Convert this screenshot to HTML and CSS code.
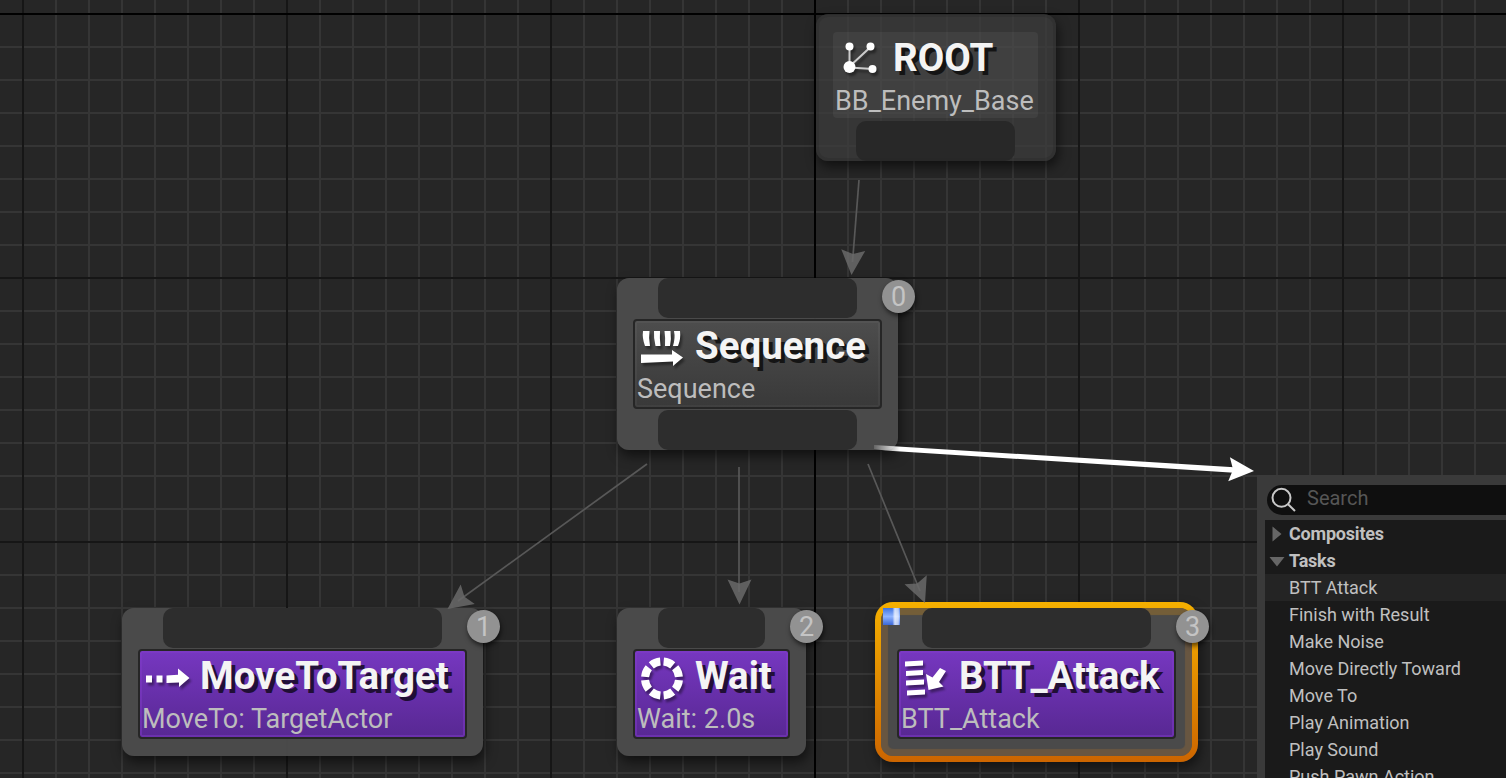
FILE: index.html
```html
<!DOCTYPE html>
<html lang="en">
<head>
  <meta charset="UTF-8">
  <meta name="viewport" content="width=device-width, initial-scale=1.0">
  <title>Behavior Tree</title>
  <link rel="stylesheet" href="styles.css">
</head>
<body>
  <main class="graph">
    <div class="axis axis-x"></div>
    <div class="axis axis-y"></div>

    <section class="node root">
      <div class="body">
        <div class="title">
          <svg class="icon" width="48" height="44" viewBox="-5 -4 48 44">
            <path d="M9.500 26.500V7M9.500 26.500L30.500 7M9.500 27.500L33 29" stroke="#ccc" stroke-width="2" fill="none"/>
            <g fill="#fff"><circle cx="9.500" cy="27" r="6"/><circle cx="9.500" cy="6.500" r="4"/><circle cx="30.500" cy="6.500" r="4"/><circle cx="32.500" cy="29" r="4"/></g>
          </svg>
          <h2>ROOT</h2>
        </div>
        <p>BB_Enemy_Base</p>
      </div>
      <div class="pin"></div>
    </section>

    <section class="node sequence">
      <div class="pin"></div>
      <div class="body">
        <div class="title">
          <svg class="icon" width="46" height="44" viewBox="-4 -1 46 44">
            <g fill="#fff">
              <path d="M2 5h6.500q-1 7 .5 15H4Q1 12 2 5zM13 5h6q-.5 7 .5 15h-5Q12.500 12 13 5zM23.500 5h6q1 8-.5 15h-5Q24.500 12 23.500 5zM33 5h6q1 8-2 15h-5Q34.500 12 33 5z"/>
              <path d="M0 28.500h31V24l11 7.500L32 40v-4.500L0 37z"/>
            </g>
          </svg>
          <h2>Sequence</h2>
        </div>
        <p>Sequence</p>
      </div>
      <div class="pin"></div>
      <span class="badge">0</span>
    </section>

    <section class="node task move">
      <div class="pin"></div>
      <div class="body">
        <div class="title">
          <svg class="icon" width="46" height="44" viewBox="-3 -1.500 46 44">
            <path fill="#fff" d="M1 19h6v7H1zM11.500 19h6v7h-6zM21.500 19l11.500-.7V12L44.500 21.500 34 30.500V26l-12.500.5z"/>
          </svg>
          <h2>MoveToTarget</h2>
        </div>
        <p>MoveTo: TargetActor</p>
      </div>
      <span class="badge">1</span>
    </section>

    <section class="node task wait">
      <div class="pin"></div>
      <div class="body">
        <div class="title">
          <svg class="icon" width="46" height="44" viewBox="-3.500 -1.500 46 44">
            <g fill="none" stroke="#fff" stroke-width="8"><circle cx="21.500" cy="22" r="17" pathLength="80" stroke-dasharray="7.400 2.600" stroke-dashoffset="-1.300"/></g>
          </svg>
          <h2>Wait</h2>
        </div>
        <p>Wait: 2.0s</p>
      </div>
      <span class="badge">2</span>
    </section>

    <section class="node task attack">
      <div class="pin"></div>
      <div class="body">
        <div class="title">
          <svg class="icon" width="46" height="44" viewBox="-3 -1 46 44">
            <g fill="#fff">
              <path d="M1 5.500l18-1v5l-18 1zM2 15l17-1v5L2 20zM2 24.500l18-1v5l-18 1zM3 34.500l18-1v5l-18 1z"/>
              <path d="M22 18l6.500 3.500L36 12l6 3-7 11 4.500 4.500L24.500 34z"/>
            </g>
          </svg>
          <h2>BTT_Attack</h2>
        </div>
        <p>BTT_Attack</p>
      </div>
      <span class="flag"></span>
      <span class="badge">3</span>
    </section>

    <svg class="wires" width="1506" height="778" viewBox="0 0 1506 778">
      <defs>
        <!-- arrow head with its tip at the origin, pointing right -->
        <path id="head" d="M0 0L-25 12L-21 0L-25-12z"/>
        <linearGradient id="fade" gradientUnits="userSpaceOnUse" x1="874" y1="0" x2="900" y2="0">
          <stop offset="0" stop-color="#fff" stop-opacity=".15"/>
          <stop offset="1" stop-color="#fff"/>
        </linearGradient>
      </defs>
      <g stroke="#585858" stroke-width="1.700">
        <path d="M859 180L852.500 262"/>
        <path d="M647 464L458 601"/>
        <path d="M739 467V592"/>
        <path d="M868 464L920 591"/>
      </g>
      <g fill="#6a6a6a" fill-opacity=".85">
        <use href="#head" transform="translate(851.500 275) rotate(94)"/>
        <use href="#head" transform="translate(447.500 609) rotate(144)"/>
        <use href="#head" transform="translate(739.500 604.500) rotate(90)"/>
        <use href="#head" transform="translate(925 603) rotate(68)"/>
      </g>
      <path d="M874 445L1238 467.500V473L885 450.500L874 449z" fill="url(#fade)"/>
      <use href="#head" fill="#fff" transform="translate(1254 471) rotate(4)"/>
    </svg>

    <aside class="menu">
      <div class="search">
        <svg width="26" height="26" viewBox="0 0 26 26"><g fill="none" stroke="#c8c8c8" stroke-width="2"><circle cx="10.500" cy="10.800" r="9"/><path d="M16.800 17L24 24"/></g></svg>
        <span>Search</span>
      </div>
      <ul>
        <li class="group"><svg width="16" height="16" viewBox="0 0 16 16"><path d="M3.500 .5L12.500 8L3.500 15.500z"/></svg>Composites</li>
        <li class="group"><svg width="16" height="16" viewBox="0 0 16 16"><path d="M.5 4H15.500L8 13.500z"/></svg>Tasks</li>
        <li class="hover">BTT Attack</li>
        <li>Finish with Result</li>
        <li>Make Noise</li>
        <li>Move Directly Toward</li>
        <li>Move To</li>
        <li>Play Animation</li>
        <li>Play Sound</li>
        <li>Push Pawn Action</li>
      </ul>
    </aside>
  </main>
</body>
</html>
```
FILE: styles.css
```css
* {
  box-sizing: border-box;
}
body {
  margin: 0;
  font-family: Roboto, sans-serif;
  background-color: #262626;
  overflow: hidden;
}
h2, p, ul {
  margin: 0;
  padding: 0;
}

/* Canvas grid: 33px cells, a dark line every 8 cells */
.graph {
  position: relative;
  width: 1506px;
  height: 778px;
  overflow: hidden;
  background-color: #262626;
  background-image:
    linear-gradient(90deg, #161616 2px, transparent 2px),
    linear-gradient(#161616 2px, transparent 2px),
    linear-gradient(90deg, #353535 2px, transparent 2px),
    linear-gradient(#353535 2px, transparent 2px);
  background-size: 264px 264px, 264px 264px, 33px 33px, 33px 33px;
  background-position: 22px 13px;
}
.axis {
  position: absolute;
  background: #000;
}
.axis-x {
  left: 0;
  top: 13px;
  width: 100%;
  height: 2px;
}
.axis-y {
  left: 814px;
  top: 0;
  width: 2px;
  height: 100%;
}

/* Nodes */
.node {
  position: absolute;
  display: flex;
  flex-direction: column;
  gap: 1px;
  padding: 0 16px;
  border-radius: 12px;
  background: rgba(76, 76, 76, 0.95);
  box-shadow: 2px 6px 12px rgba(0, 0, 0, 0.55);
}
.pin {
  height: 40px;
  margin: 0 25px;
  border-radius: 10px;
  background: #2d2d2d;
}
.body {
  height: 90px;
  padding: 0 2px;
  border: 2px solid #262626;
  border-radius: 4px;
  background: linear-gradient(#4d4d4d, #393939);
  box-shadow: inset 0 0 0 2px rgba(255, 255, 255, 0.04);
}
.title {
  display: flex;
  align-items: center;
  height: 51px;
  gap: 12px;
}
.icon {
  flex: none;
  overflow: visible;
  filter: drop-shadow(2px 3px 1px rgba(0, 0, 0, 0.4));
}
h2 {
  margin-top: -2px;
  font-size: 38.5px;
  line-height: 48px;
  color: #f4f4f4;
  text-shadow: 4px 4px 0 rgba(0, 0, 0, 0.7);
  white-space: nowrap;
}
.body p {
  margin-top: 1px;
  font-size: 27px;
  line-height: 32px;
  color: #bdbdbd;
  white-space: nowrap;
}
.task .body {
  background: linear-gradient(#7637c0, #582893);
  box-shadow: inset 0 0 0 2px rgba(130, 60, 205, 0.45);
}

.root {
  left: 816px;
  top: 14px;
  width: 240px;
  height: 147px;
  padding-top: 18px;
  gap: 3px;
  background: rgba(60, 60, 60, 0.75);
  box-shadow: inset 0 0 0 3px rgba(40, 40, 40, 0.3), 2px 6px 12px rgba(0, 0, 0, 0.55);
}
.root .body {
  height: 86px;
  margin: 0 2px 0 1px;
  padding: 0 2px;
  border: 0;
  background: rgba(255, 255, 255, 0.05);
  box-shadow: none;
}
.root .title {
  gap: 10px;
}
.root h2 {
  margin-top: 0;
}
.root p {
  margin-top: 2px;
}
.root .pin {
  margin: 0 25px 0 24px;
  background: rgba(38, 38, 38, 0.85);
}
.sequence {
  left: 617px;
  top: 278px;
  width: 281px;
  height: 172px;
}
.move {
  left: 122px;
  top: 608px;
  width: 361px;
  height: 148px;
}
.wait {
  left: 617px;
  top: 608px;
  width: 189px;
  height: 148px;
}
.attack {
  left: 881px;
  top: 608px;
  z-index: 0;
  width: 311px;
  height: 148px;
  background: none;
  box-shadow: none;
}
.attack h2 {
  letter-spacing: -0.15px;
}
/* Selection outline */
.attack::before {
  content: "";
  position: absolute;
  inset: -6px;
  z-index: -1;
  border-radius: 18px;
  background: linear-gradient(#f5b000, #cc6500);
  box-shadow: 2px 6px 12px rgba(0, 0, 0, 0.5);
}
.attack::after {
  content: "";
  position: absolute;
  inset: 0;
  z-index: -1;
  border-radius: 12px;
  background: #4a4a4a;
  box-shadow: inset 0 8px 1px -1px rgba(125, 100, 50, 0.6), inset 0 0 1px 7px rgba(125, 95, 60, 0.6);
}

.badge {
  position: absolute;
  top: 2px;
  right: -17px;
  width: 33px;
  height: 33px;
  border-radius: 50%;
  background: #929292;
  color: #c4c4c4;
  font-size: 27px;
  line-height: 34px;
  text-align: center;
  box-shadow: 1px 3px 5px rgba(0, 0, 0, 0.6);
}
.flag {
  position: absolute;
  left: 2px;
  top: 0;
  width: 17px;
  height: 17px;
  background: linear-gradient(90deg, transparent 55%, rgba(255, 255, 255, 0.75) 70%, rgba(255, 255, 255, 0.6) 90%, transparent), linear-gradient(#3f73e0, #8fb4ff 50%, #3b68d8);
}
.wires {
  position: absolute;
  left: 0;
  top: 0;
}

/* Node picker */
.menu {
  position: absolute;
  left: 1257px;
  top: 475px;
  width: 249px;
  height: 303px;
  padding: 10px 0 0 8px;
  background: #3a3a3a;
  overflow: hidden;
}
.search {
  display: flex;
  align-items: center;
  gap: 10px;
  height: 30px;
  margin-left: 2px;
  padding-left: 4px;
  border-radius: 15px 0 0 15px;
  background: #0f0f0f;
  color: #565656;
  font-size: 20px;
}
.search span {
  line-height: 26px;
  padding-bottom: 4px;
}
.menu ul {
  margin-top: 5px;
  background: #1a1a1a;
  list-style: none;
}
.menu li {
  height: 27px;
  padding-left: 24px;
  font-size: 18px;
  line-height: 27px;
  color: #c0c0c0;
  white-space: nowrap;
}
.menu .group {
  display: flex;
  align-items: center;
  gap: 4px;
  padding-left: 4px;
  font-weight: bold;
  letter-spacing: -0.2px;
}
.group svg {
  fill: #666;
}
.menu .hover {
  background: #242424;
}
```
